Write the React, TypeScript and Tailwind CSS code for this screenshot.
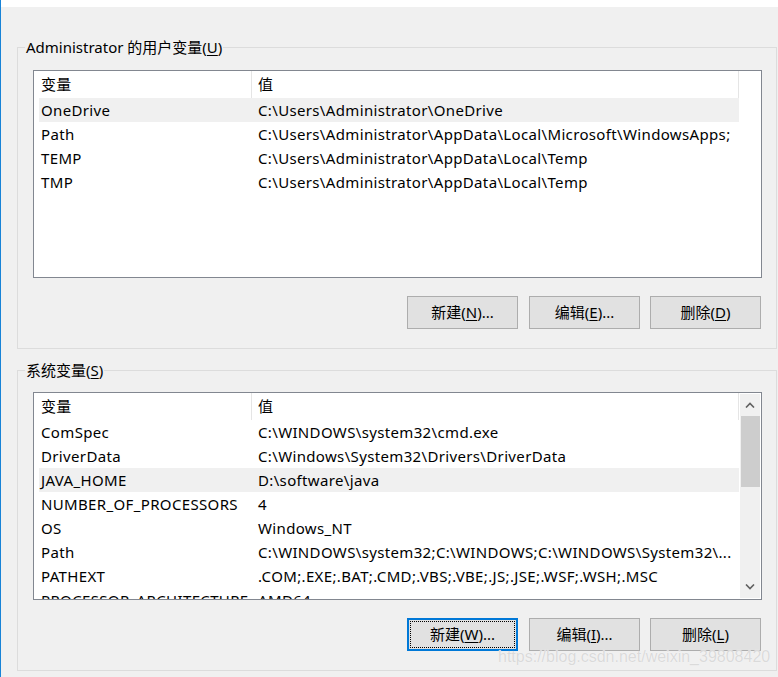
import React from 'react';

const font = { fontFamily: '"Noto Sans", "Noto Sans CJK SC", sans-serif' };

type Row = { name: string; value: string; selected?: boolean };

const userVars: Row[] = [
  { name: 'OneDrive', value: 'C:\\Users\\Administrator\\OneDrive', selected: true },
  { name: 'Path', value: 'C:\\Users\\Administrator\\AppData\\Local\\Microsoft\\WindowsApps;' },
  { name: 'TEMP', value: 'C:\\Users\\Administrator\\AppData\\Local\\Temp' },
  { name: 'TMP', value: 'C:\\Users\\Administrator\\AppData\\Local\\Temp' },
];

const sysVars: Row[] = [
  { name: 'ComSpec', value: 'C:\\WINDOWS\\system32\\cmd.exe' },
  { name: 'DriverData', value: 'C:\\Windows\\System32\\Drivers\\DriverData' },
  { name: 'JAVA_HOME', value: 'D:\\software\\java', selected: true },
  { name: 'NUMBER_OF_PROCESSORS', value: '4' },
  { name: 'OS', value: 'Windows_NT' },
  { name: 'Path', value: 'C:\\WINDOWS\\system32;C:\\WINDOWS;C:\\WINDOWS\\System32\\...' },
  { name: 'PATHEXT', value: '.COM;.EXE;.BAT;.CMD;.VBS;.VBE;.JS;.JSE;.WSF;.WSH;.MSC' },
  { name: 'PROCESSOR_ARCHITECTURE', value: 'AMD64' },
];

function Btn({ label, hot, tail, focused }: { label: string; hot: string; tail: string; focused?: boolean }) {
  return (
    <button
      className={
        focused
          ? 'w-[111px] h-[33px] bg-[#e1e1e1] border-2 border-[#0078d7] p-[1px] text-[15px] text-black'
          : 'w-[111px] h-[33px] bg-[#e1e1e1] border border-[#adadad] text-[15px] text-black'
      }
    >
      <span
        className={
          focused
            ? 'flex h-full w-full items-center justify-center border border-dotted border-black'
            : 'flex h-full w-full items-center justify-center'
        }
      >
        {label}(<span className="underline underline-offset-2">{hot}</span>){tail}
      </span>
    </button>
  );
}

function VarList({ rows, scroll }: { rows: Row[]; scroll?: boolean }) {
  return (
    <div className="h-[208px] border border-[#828790] bg-white flex overflow-hidden tracking-[0.35px]">
      <div className="flex-1 pl-[5px] overflow-hidden">
        <div className="flex h-[27px] w-[700px] items-center border-r border-[#e5e5e5]">
          <div className="w-[213px] h-full pl-[2px] flex items-center border-r border-[#e5e5e5]">变量</div>
          <div className="pl-[6px]">值</div>
        </div>
        {rows.map((r) => (
          <div
            key={r.name}
            className={
              r.selected
                ? 'flex h-[24px] w-[700px] items-center bg-[#f0f0f0] whitespace-nowrap'
                : 'flex h-[24px] w-[700px] items-center whitespace-nowrap'
            }
          >
            <div className="w-[213px] pl-[2px] shrink-0 overflow-hidden">{r.name}</div>
            <div className="pl-[6px]">{r.value}</div>
          </div>
        ))}
      </div>
      {scroll && (
        <div className="w-[20px] mr-[1px] mt-[1px] mb-[1px] bg-[#f0f0f0] flex flex-col items-center">
          <div className="h-[22px] flex items-center justify-center">
            <svg width="10" height="6" viewBox="0 0 10 6">
              <path d="M1 5.5 L5 1.5 L9 5.5" fill="none" stroke="#606060" strokeWidth="1.6" />
            </svg>
          </div>
          <div className="h-[71px] w-[19px] bg-[#cdcdcd]" />
          <div className="flex-1" />
          <div className="h-[22px] flex items-center justify-center">
            <svg width="10" height="6" viewBox="0 0 10 6">
              <path d="M1 0.5 L5 4.5 L9 0.5" fill="none" stroke="#606060" strokeWidth="1.6" />
            </svg>
          </div>
        </div>
      )}
    </div>
  );
}

function Group({ title, hot, children }: { title: string; hot: string; children: React.ReactNode }) {
  return (
    <div className="relative ml-[16px] w-[760px] border border-[#dcdcdc] pl-[15px] pr-[14px]">
      <span className="absolute left-[7px] top-[-12px] bg-[#f0f0f0] px-[1px] text-[15px] leading-[22px]">
        {title}(<span className="underline underline-offset-2">{hot}</span>)
      </span>
      {children}
    </div>
  );
}

export default function App() {
  return (
    <div
      className="relative w-[778px] h-[677px] bg-[#f0f0f0] border-l border-[#1883d7] overflow-hidden text-[15px] text-black"
      style={font}
    >
      <div className="h-[7px] bg-white" />

      {/* user variables */}
      <div className="mt-[40px]">
        <Group title="Administrator 的用户变量" hot="U">
          <div className="pt-[22px]">
            <VarList rows={userVars} />
          </div>
          <div className="flex justify-end pt-[18px] pb-[19px] pr-[1px]">
            <Btn label="新建" hot="N" tail="..." />
            <div className="w-[11px]" />
            <Btn label="编辑" hot="E" tail="..." />
            <div className="w-[10px]" />
            <Btn label="删除" hot="D" tail="" />
          </div>
        </Group>
      </div>

      {/* system variables */}
      <div className="mt-[21px]">
        <Group title="系统变量" hot="S">
          <div className="pt-[21px]">
            <VarList rows={sysVars} scroll />
          </div>
          <div className="flex justify-end pt-[18px] pb-[19px] pr-[1px]">
            <Btn label="新建" hot="W" tail="..." focused />
            <div className="w-[11px]" />
            <Btn label="编辑" hot="I" tail="..." />
            <div className="w-[10px]" />
            <Btn label="删除" hot="L" tail="" />
          </div>
        </Group>
      </div>

      {/* watermark */}
      <div
        className="absolute left-[497px] top-[645px] text-[16px] text-[#dadada] whitespace-nowrap"
        style={{ fontFamily: '"Liberation Sans", Arial, sans-serif', textShadow: '0 0 1px #ffffff' }}
      >
        https://blog.csdn.net/weixin_39808420
      </div>
    </div>
  );
}
